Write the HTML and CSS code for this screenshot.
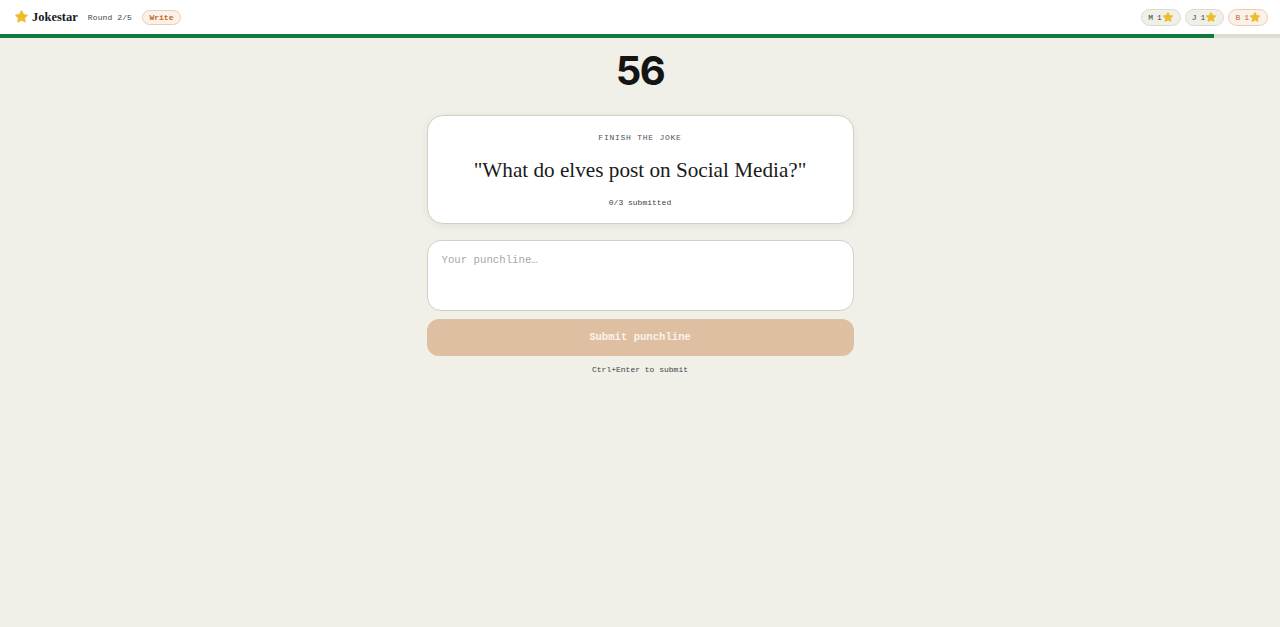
FILE: index.html
```html
<!DOCTYPE html>
<html lang="en">
<head>
  <meta charset="UTF-8">
  <meta name="viewport" content="width=device-width, initial-scale=1.0">
  <title>Jokestar</title>
  <link rel="stylesheet" href="styles.css">
</head>
<body>
  <svg class="defs" width="0" height="0">
    <symbol id="star" viewBox="0 0 24 24">
      <path d="M12 3.500l2.700 5.600 6.100.8-4.500 4.200 1.200 6.100-5.500-3-5.500 3 1.200-6.100-4.500-4.200 6.100-.8z"/>
    </symbol>
  </svg>

  <!-- Barra superior -->
  <header class="topbar">
    <div class="topbar-left">
      <div class="brand">
        <svg class="star star-brand"><use href="#star"/></svg>
        <span>Jokestar</span>
      </div>
      <span class="round">Round 2/5</span>
      <span class="phase">Write</span>
    </div>
    <div class="players">
      <div class="player"><span class="initial">M</span><span class="score">1</span><svg class="star"><use href="#star"/></svg></div>
      <div class="player"><span class="initial">J</span><span class="score">1</span><svg class="star"><use href="#star"/></svg></div>
      <div class="player player-me"><span class="initial">B</span><span class="score">1</span><svg class="star"><use href="#star"/></svg></div>
    </div>
  </header>

  <!-- Progreso -->
  <div class="progress"><div class="progress-fill" style="width: 94.85%"></div></div>

  <main class="game">
    <div class="timer">56</div>

    <section class="card">
      <p class="card-label">FINISH THE JOKE</p>
      <h1 class="prompt">"What do elves post on Social Media?"</h1>
      <p class="submitted">0/3 submitted</p>
    </section>

    <textarea class="answer" placeholder="Your punchline…"></textarea>
    <button class="submit" disabled>Submit punchline</button>
    <p class="hint">Ctrl+Enter to submit</p>
  </main>
</body>
</html>
```

FILE: styles.css
```css
* {
  box-sizing: border-box;
}

body {
  margin: 0;
  min-height: 627px;
  background-color: #f0efe8;
  color: #1a1a1a;
  font-family: "Liberation Mono", monospace;
}

.defs {
  position: absolute;
}

.topbar {
  display: flex;
  justify-content: space-between;
  align-items: center;
  height: 34px;
  padding: 0 12px 0 14px;
  background-color: #fff;
}

.topbar-left {
  display: flex;
  align-items: center;
}

.brand {
  display: flex;
  align-items: center;
  gap: 3px;
  font-family: "Liberation Serif", serif;
  font-size: 12.500px;
  font-weight: bold;
}

.star {
  width: 12px;
  height: 12px;
  fill: #eebd2b;
  stroke: #eebd2b;
  stroke-width: 2.500;
  stroke-linejoin: round;
}

.star-brand {
  width: 15px;
  height: 15px;
  margin-top: -1px;
}

.round {
  margin-left: 10px;
  font-size: 8px;
  letter-spacing: 0.100px;
  color: #444;
}

.phase {
  margin-left: 10px;
  padding: 2px 6.500px;
  border: 1px solid #eccdb0;
  border-radius: 8px;
  background-color: #fbf1e8;
  color: #c0682a;
  font-size: 8px;
  font-weight: bold;
}

.players {
  display: flex;
  gap: 4px;
}

.player {
  display: flex;
  align-items: center;
  height: 17px;
  padding: 0 6px;
  border: 1px solid #dddbd1;
  border-radius: 9px;
  background-color: #f0efe8;
  color: #444;
  font-size: 8px;
}

.score {
  margin-left: 4px;
}

.player-me {
  border-color: #eccdb0;
  background-color: #fbf1e8;
  color: #c0682a;
}

.progress {
  height: 4px;
  background-color: #dedcd3;
}

.progress-fill {
  height: 100%;
  background-color: #0f7a3d;
}

.game {
  display: flex;
  flex-direction: column;
  width: 427px;
  margin: 0 auto;
}

.timer {
  margin-top: 8px;
  font-family: Inter, sans-serif;
  font-size: 40px;
  font-weight: 700;
  line-height: 50px;
  letter-spacing: -1.500px;
  text-align: center;
  color: #141414;
}

.card {
  height: 109px;
  margin-top: 19px;
  padding-top: 17px;
  border: 1px solid #d2d0c6;
  border-radius: 16px;
  background-color: #fff;
  box-shadow: 0 2px 8px rgba(0, 0, 0, 0.06);
  text-align: center;
}

.card-label {
  margin: 0;
  font-size: 8px;
  line-height: 9px;
  letter-spacing: 0.750px;
  color: #4c5460;
}

.prompt {
  margin: 13px 0 0;
  font-family: "Liberation Serif", serif;
  font-size: 21.200px;
  font-weight: normal;
  line-height: 30px;
  color: #1a1a1a;
}

.submitted {
  margin: 13px 0 0;
  font-size: 8px;
  line-height: 9px;
  color: #444;
}

.answer {
  display: block;
  width: 100%;
  height: 71px;
  margin-top: 16px;
  padding: 13px 14px;
  border: 1px solid #d2d0c6;
  border-radius: 14px;
  background-color: #fff;
  font-family: "Liberation Mono", monospace;
  font-size: 10.700px;
  resize: none;
}

.answer::placeholder {
  color: #a9a7a0;
}

.submit {
  height: 37px;
  margin-top: 8px;
  padding-bottom: 3px;
  border: none;
  border-radius: 12px;
  background-color: #dfbfa1;
  color: #faf3ea;
  font-family: "Liberation Mono", monospace;
  font-size: 10.600px;
  font-weight: bold;
}

.hint {
  margin: 9px 0 0;
  font-size: 8px;
  line-height: 9px;
  text-align: center;
  color: #444;
}
```
